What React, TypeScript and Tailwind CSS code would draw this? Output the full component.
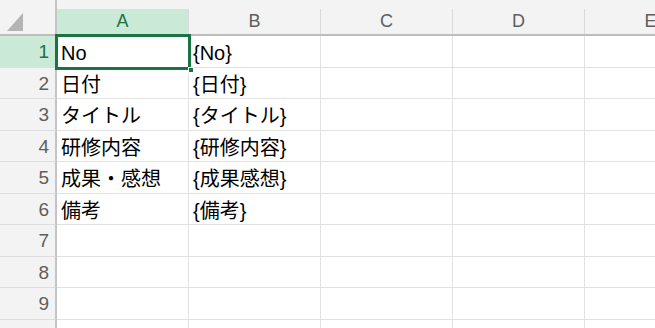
const columns = ["A", "B", "C", "D", "E"];

type Row = { n: number; label: string; cells: string[]; h: number };

const rows: Row[] = [
  { n: 1, label: "1", cells: ["No", "{No}"], h: 32 },
  { n: 2, label: "2", cells: ["日付", "{日付}"], h: 31 },
  { n: 3, label: "3", cells: ["タイトル", "{タイトル}"], h: 32 },
  { n: 4, label: "4", cells: ["研修内容", "{研修内容}"], h: 31 },
  { n: 5, label: "5", cells: ["成果・感想", "{成果感想}"], h: 32 },
  { n: 6, label: "6", cells: ["備考", "{備考}"], h: 31 },
  { n: 7, label: "7", cells: [], h: 32 },
  { n: 8, label: "8", cells: [], h: 31 },
  { n: 9, label: "9", cells: [], h: 32 },
  // row 10 is only a sliver at the bottom edge, its number is hidden
  { n: 10, label: "", cells: [], h: 31 },
];

const font = { fontFamily: '"Liberation Sans", "Noto Sans CJK JP", sans-serif' };

export default function App() {
  return (
    <div className="relative h-[328px] w-[655px] overflow-hidden bg-white" style={font}>
      {/* top strip */}
      <div className="flex h-[9px]">
        <div className="h-full w-[57px] shrink-0 border-r-2 border-[#c4c4c4] bg-[#f3f3f3]" />
        <div className="h-full flex-1 bg-[#f3f3f3]" />
      </div>

      {/* column headers */}
      <div className="flex h-[27px] border-b-2 border-[#bdbdbd] bg-[#f3f3f3]">
        <div className="relative h-full w-[57px] shrink-0 border-r-2 border-[#c4c4c4]">
          <svg className="absolute left-[7px] top-[4px]" width="16" height="18" viewBox="0 0 16 18">
            <polygon points="16,0 16,18 0,18" fill="#b4b4b4" />
          </svg>
        </div>
        {columns.map((c, i) => (
          <div
            key={c}
            className={`flex h-full w-[132px] shrink-0 items-center justify-center border-r border-[#dadada] text-[18px] ${
              i === 0 ? "bg-[#cae9d6] text-[#1e7145]" : "text-[#5e5e5e]"
            }`}
          >
            {c}
          </div>
        ))}
      </div>

      {/* rows */}
      {rows.map((row) => (
        <div key={row.n} className="flex" style={{ height: row.h }}>
          <div
            className={`flex w-[57px] shrink-0 items-center justify-end border-r-2 border-b border-r-[#c4c4c4] border-b-[#dedede] pr-[6px] pt-[2px] text-[19px] ${
              row.n === 1 ? "bg-[#cae9d6] text-[#1e7145]" : "bg-[#f3f3f3] text-[#5e5e5e]"
            }`}
          >
            {row.label}
          </div>
          {columns.map((c, i) => (
            <div
              key={c}
              className="flex w-[132px] shrink-0 items-center overflow-hidden whitespace-nowrap border-r border-b border-[#e1e1e1] pl-[4px] pt-[3px] text-[20px] text-black"
            >
              {row.cells[i] ?? ""}
            </div>
          ))}
        </div>
      ))}

      {/* selection around A1 */}
      <div className="absolute left-[55px] top-[34px] h-[36px] w-[136px] border-[3px] border-[#1a7343]" />
      <div className="absolute left-[188px] top-[67px] h-[6px] w-[6px] border border-white bg-[#1a7343]" />
    </div>
  );
}
